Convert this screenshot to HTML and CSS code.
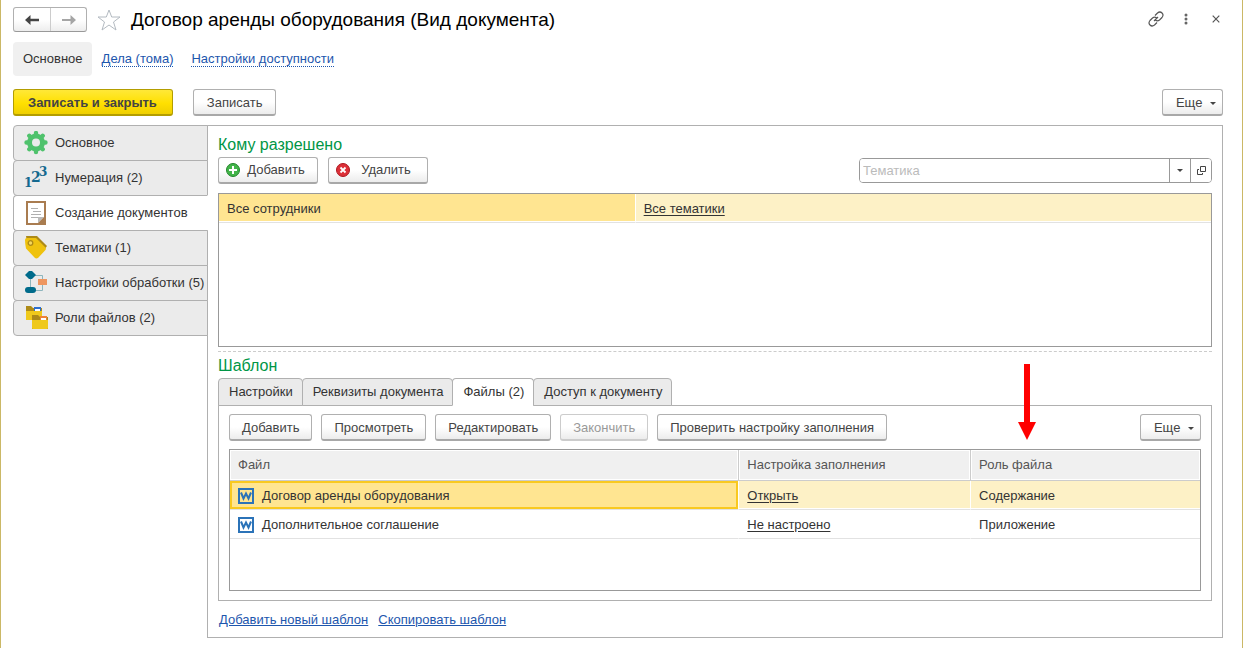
FILE: index.html
```html
<!DOCTYPE html>
<html lang="ru">
<head>
<meta charset="utf-8">
<title>Договор аренды оборудования (Вид документа)</title>
<link rel="stylesheet" href="styles.css">
</head>
<body>
<div class="window">
  <header class="titlebar">
    <div class="history">
      <button type="button" aria-label="Назад"><svg width="14" height="10" viewBox="0 0 14 10"><path d="M0 5 5.500 0V3.700H14V6.300H5.500V10Z" fill="#444"/></svg></button>
      <button type="button" aria-label="Вперед"><svg width="14" height="10" viewBox="0 0 14 10"><path d="M14 5 8.500 0V4H0V6H8.500V10Z" fill="#a5a5a5"/></svg></button>
    </div>
    <button type="button" class="plain" aria-label="В избранное"><svg width="24" height="22" viewBox="0 0 24 22"><path d="M12 1 14.700 8H23L16.500 13 19 21 12 16 5 21 7.500 13 1 8H9.300Z" fill="#fff" stroke="#b3bac1"/></svg></button>
    <h1>Договор аренды оборудования (Вид документа)</h1>
    <div class="tools">
      <button type="button" class="plain" aria-label="Ссылка"><svg width="16" height="16" viewBox="0 0 16 16" fill="none" stroke="#555" stroke-width="1.200"><path d="M7 4.500 9.500 2Q12 0 14 2T14 6.500L11.500 9Q9.500 10.500 7.500 9.300M9 11.500 6.500 14Q4 16 2 14T2 9.500L4.500 7Q6.500 5.500 8.500 6.700M6 10 10 6"/></svg></button>
      <button type="button" class="plain" aria-label="Меню"><svg width="4" height="12" viewBox="0 0 4 12" fill="#666"><circle cx="2" cy="2" r="1.500"/><circle cx="2" cy="6" r="1.500"/><circle cx="2" cy="10" r="1.500"/></svg></button>
      <button type="button" class="plain" aria-label="Закрыть"><svg width="8" height="8" viewBox="0 0 8 8"><path d="M.7.7 7.300 7.300M7.300.7.7 7.300" stroke="#555" stroke-width="1.200"/></svg></button>
    </div>
  </header>

  <nav class="sections">
    <span class="current">Основное</span>
    <a href="#">Дела (тома)</a>
    <a href="#">Настройки доступности</a>
  </nav>

  <div class="commands">
    <button type="button" class="btn primary">Записать и закрыть</button>
    <button type="button" class="btn">Записать</button>
    <button type="button" class="btn more">Еще <i class="caret"></i></button>
  </div>

  <main class="workspace">
    <nav class="side">
      <button type="button"><svg width="24" height="24" viewBox="0 0 24 24"><g fill="#4fc26c"><circle cx="12" cy="11.500" r="9"/><g stroke="#4fc26c" stroke-width="4.400" stroke-linecap="round"><path d="M12 2V21M2.500 11.500H21.500M5.300 4.800 18.700 18.200M18.700 4.800 5.300 18.200"/></g></g><circle cx="12" cy="11.500" r="4" fill="#ebebeb"/></svg>Основное</button>
      <button type="button"><svg width="24" height="24" viewBox="0 0 24 24" class="digits"><text x="0" y="21" font-size="12">1</text><text x="7" y="16" font-size="14">2</text><text x="15" y="10" font-size="12">3</text></svg>Нумерация (2)</button>
      <button type="button" class="active"><svg width="24" height="24" viewBox="0 0 24 24"><path d="M3 1H21V23H3Z" fill="#fff" stroke="#a97c50" stroke-width="2"/><path d="M7 7.500H14M9 10.500H17M7 13.500H17M7 16.500H14" stroke="#b0b0b0"/><path d="M14 22V16H20Z" fill="#b9b9b9"/><path d="M14 22 20 16V22Z" fill="#a97c50"/></svg>Создание документов</button>
      <button type="button"><svg width="24" height="24" viewBox="0 0 24 24"><path d="M2 0H13L23 10 20 14 3 6Z" fill="#ad8a18"/><path d="M1 4Q1 2 3 2H12L21.500 11.500Q22.500 13 21 14.500L14 22Q12 23 10.500 21.500L2 12.500Q1 8 1 4Z" fill="#efc20e"/><circle cx="6.500" cy="7" r="2.300" fill="#f5d75c" stroke="#ad8a18" stroke-width="1.300"/></svg>Тематики (1)</button>
      <button type="button"><svg width="24" height="24" viewBox="0 0 24 24"><path d="M6.500 4.500H18.500V19.500H6.500Z" fill="none" stroke="#8db5bd"/><path d="M1 4 5 0H8L12 4 8 8H5Z" fill="#006b8b"/><rect x="14" y="8" width="9" height="6" fill="#ee9660"/><rect x="1" y="16" width="11" height="6" rx="3" fill="#006b8b"/></svg>Настройки обработки (5)</button>
      <button type="button"><svg width="24" height="24" viewBox="0 0 24 24"><path d="M2 0H7L9 2H18V14H2Z" fill="#ad8a18"/><path d="M10 1H17V8H10Z" fill="#2c6fd1"/><path d="M11 3H16V8H11Z" fill="#fff"/><path d="M2 5H18V14H2Z" fill="#efc91c"/><path d="M8 9H14L16 11H24V23H8Z" fill="#ad8a18"/><path d="M16 10H23V16H16Z" fill="#ef8238"/><path d="M17 12H22V16H17Z" fill="#fff"/><path d="M8 14H24V22Q24 23 23 23H9Q8 23 8 22Z" fill="#efc91c"/></svg>Роли файлов (2)</button>
    </nav>

    <section class="panel">
      <h2>Кому разрешено</h2>
      <div class="bar">
        <button type="button" class="btn icon"><svg width="14" height="14" viewBox="0 0 14 14"><circle cx="7" cy="7" r="6.500" fill="#42b449" stroke="#23862c"/><path d="M7 3V11M3 7H11" stroke="#fff" stroke-width="2"/></svg><span>Добавить</span></button>
        <button type="button" class="btn icon"><svg width="14" height="14" viewBox="0 0 14 14"><circle cx="7" cy="7" r="6.500" fill="#dc3038" stroke="#ad1820"/><path d="M4.500 4.500 9.500 9.500M9.500 4.500 4.500 9.500" stroke="#fff" stroke-width="1.800"/></svg><span>Удалить</span></button>
        <div class="lookup">
          <input type="text" placeholder="Тематика" aria-label="Тематика">
          <button type="button" aria-label="Выбрать из списка"><i class="caret"></i></button>
          <button type="button" aria-label="Открыть"><svg width="9" height="9" viewBox="0 0 9 9" fill="none" stroke="#444"><path d="M3.500.5H8.500V5.500H3.500ZM2 3.500H.5V8.500H5.500V7"/></svg></button>
        </div>
      </div>
      <div class="grid access">
        <table>
          <colgroup><col class="who"><col></colgroup>
          <tbody><tr class="selected"><td class="focus">Все сотрудники</td><td><a href="#">Все тематики</a></td></tr></tbody>
        </table>
      </div>

      <div class="splitter"></div>
      <h2>Шаблон</h2>
      <div class="tabs" role="tablist">
        <button type="button" role="tab">Настройки</button>
        <button type="button" role="tab">Реквизиты документа</button>
        <button type="button" role="tab" class="active" aria-selected="true">Файлы (2)</button>
        <button type="button" role="tab">Доступ к документу</button>
      </div>
      <div class="tabpanel">
        <div class="bar">
          <button type="button" class="btn">Добавить</button>
          <button type="button" class="btn">Просмотреть</button>
          <button type="button" class="btn">Редактировать</button>
          <button type="button" class="btn" disabled>Закончить</button>
          <button type="button" class="btn">Проверить настройку заполнения</button>
          <button type="button" class="btn more">Еще <i class="caret"></i></button>
        </div>
        <div class="grid files">
          <table>
            <colgroup><col class="file"><col class="setup"><col></colgroup>
            <thead><tr><th>Файл</th><th>Настройка заполнения</th><th>Роль файла</th></tr></thead>
            <tbody>
              <tr class="selected"><td class="cursor"><span class="doc"><svg width="16" height="16" viewBox="0 0 16 16"><rect x="1" y="1" width="14" height="14" fill="none" stroke="#2b73b8" stroke-width="2"/><path d="M3 4.500 5.500 10.500 8 5.500 10.500 10.500 13 4.500" fill="none" stroke="#2b73b8" stroke-width="2"/></svg>Договор аренды оборудования</span></td><td><a href="#">Открыть</a></td><td>Содержание</td></tr>
              <tr><td><span class="doc"><svg width="16" height="16" viewBox="0 0 16 16"><rect x="1" y="1" width="14" height="14" fill="#fff" stroke="#2b73b8" stroke-width="2"/><path d="M3 4.500 5.500 10.500 8 5.500 10.500 10.500 13 4.500" fill="none" stroke="#2b73b8" stroke-width="2"/></svg>Дополнительное соглашение</span></td><td><a href="#">Не настроено</a></td><td>Приложение</td></tr>
            </tbody>
          </table>
        </div>
        <svg class="pointer" width="18" height="76" viewBox="0 0 18 76" aria-hidden="true"><path d="M6 0H12V58H18L9 76 0 58H6Z" fill="#f00"/></svg>
      </div>
      <div class="links"><a href="#">Добавить новый шаблон</a><a href="#">Скопировать шаблон</a></div>
    </section>
  </main>
</div>
</body>
</html>
```
FILE: styles.css
```css
* { box-sizing: border-box; }
body { margin: 0; background: #fff; }
body, button, input { font: 13px/16px "Liberation Sans", Arial, sans-serif; color: #333; }
button { margin: 0; padding: 0; }
svg { display: block; flex: none; }

.window {
  display: flex;
  flex-direction: column;
  min-height: 100vh;
  padding: 7px 19px 10px 12px;
  border: solid #cbb866;
  border-width: 0 1px;
}

.titlebar { display: flex; align-items: center; height: 25px; }
.history {
  display: flex;
  height: 25px;
  margin-right: 10px;
  border: 1px solid #b0b0b0;
  border-bottom-color: #999;
  border-radius: 3px;
  background: linear-gradient(#fff 50%, #ededed);
}
.history button {
  display: grid;
  place-items: center;
  width: 36px;
  border: 0;
  background: none;
}
.history button + button { border-left: 1px solid #ccc; }
.plain { display: grid; place-items: center; border: 0; background: none; }
h1 { margin: 0 0 0 10px; font-size: 19px; line-height: 24px; font-weight: 400; color: #000; }
.tools { display: flex; align-items: center; gap: 20px; height: 24px; margin: 0 3px auto auto; }
.tools .plain + .plain + .plain { margin-left: 4px; }
.tools .plain { height: 16px; }

.sections { display: flex; align-items: center; gap: 18px; margin-top: 10px; }
.sections .current {
  padding: 9px 9px 9px 10px;
  margin-right: -8px;
  border-radius: 4px;
  background: #f0f0f0;
}
a { color: #1d56ad; }
.sections a { text-decoration: none; border-bottom: 1px dotted; line-height: 14px; }

.commands { display: flex; gap: 20px; margin: 13px 0 9px; }
.btn {
  height: 27px;
  padding: 1px 12px 0;
  border: 1px solid #b0b0b0;
  border-bottom: 2px solid #a8a8a8;
  border-radius: 3px;
  background: linear-gradient(#fff 50%, #ececec);
  color: #444;
  white-space: nowrap;
}
.commands .btn { padding: 1px 13px 0; }
.btn:disabled { border-color: #ccc; color: #999; }
.commands .primary {
  padding: 1px 15px 0 14px;
  border-color: #b39d00;
  background: linear-gradient(#ffe838, #ffe000 55%, #efcf00);
  font-weight: 700;
}
.bar .more, .commands .more { margin-left: auto; padding: 1px 6px 0 13px; }
.caret {
  display: inline-block;
  margin-left: 4px;
  vertical-align: 2px;
  border: solid transparent;
  border-width: 3px 3px 0;
  border-top-color: #444;
}

.workspace { display: flex; flex: 1; }
.side { display: flex; flex-direction: column; width: 195px; flex: none; margin-right: -1px; z-index: 1; }
.side button {
  display: flex;
  align-items: center;
  gap: 7px;
  height: 36px;
  margin-bottom: -1px;
  padding-left: 10px;
  border: 1px solid #b0b0b0;
  border-radius: 4px 0 0 4px;
  background: #ebebeb;
  white-space: nowrap;
}
.side .active { border-right-color: #fff; background: #fff; }
.digits { fill: #14698f; font-family: "DejaVu Serif", serif; font-weight: 700; }

.panel {
  display: flex;
  flex: 1;
  flex-direction: column;
  min-width: 0;
  padding: 9px 10px 9px;
  border: 1px solid #b0b0b0;
}
h2 { margin: 0; font-size: 16px; line-height: 20px; font-weight: 400; color: #009646; }
.bar { display: flex; gap: 9px; }
h2 + .bar { gap: 10px; margin: 2px 0 9px; }
.bar .icon { display: flex; align-items: center; width: 100px; padding: 0 7px; }
.btn.icon span { flex: 1; padding-left: 2px; text-align: center; }

.lookup {
  display: flex;
  width: 353px;
  height: 25px;
  margin: 1px 0 0 auto;
  border: 1px solid #999;
  border-radius: 4px;
  overflow: hidden;
}
.lookup input { flex: 1; min-width: 0; padding: 0 3px; border: 0; outline: 0; }
.lookup input::placeholder { color: #bbb; }
.lookup button {
  display: grid;
  place-items: center;
  width: 21px;
  border: 0;
  border-left: 1px solid #999;
  background: #fff;
}
.lookup .caret { margin: 0; }

.grid { border: 1px solid #999; }
.access { flex: 1; min-height: 100px; }
table { width: 100%; table-layout: fixed; border-collapse: separate; border-spacing: 0; }
.who { width: 41.9%; }
.file { width: 52.4%; }
.setup { width: 23.9%; }
td, th { padding: 0 8px; text-align: left; font-weight: 400; }
td { height: 29px; padding-top: 2px; border-bottom: 1px solid #e2e2e2; }
th {
  height: 31px;
  border-bottom: 1px solid #ccc;
  background: #f0f0f0;
  box-shadow: inset 0 0 0 1px #fff;
  color: #555;
}
th + th { border-left: 1px solid #ccc; }
td + td { border-left: 1px solid transparent; }
td a { color: #333; text-underline-offset: 2px; }
.selected td { background: #fdf1c6; background-clip: padding-box; box-shadow: inset 0 -1px #fff; }
.selected .focus { background: #ffe591; }
.selected .cursor { background: #ffe591; box-shadow: inset 0 0 0 2px #f9c920; }
.doc { display: flex; align-items: center; gap: 8px; }

.splitter { margin: 4px 0; border-top: 1px dashed #ccc; }
.tabs { display: flex; margin: 2px 0 -1px; z-index: 1; }
.tabs button {
  height: 28px;
  padding: 0 9px 0 10px;
  margin-right: -1px;
  border: 1px solid #b0b0b0;
  border-radius: 4px 4px 0 0;
  background: #ebebeb;
}
.tabs .active { border-bottom-color: #fff; background: #fff; }
.tabpanel { position: relative; padding: 8px 10px 9px; border: 1px solid #b0b0b0; }
.files { height: 142px; margin-top: 8px; }
.pointer { position: absolute; right: 175px; top: -42px; }
.links { display: flex; gap: 10px; margin-top: 11px; padding-left: 1px; }
```
